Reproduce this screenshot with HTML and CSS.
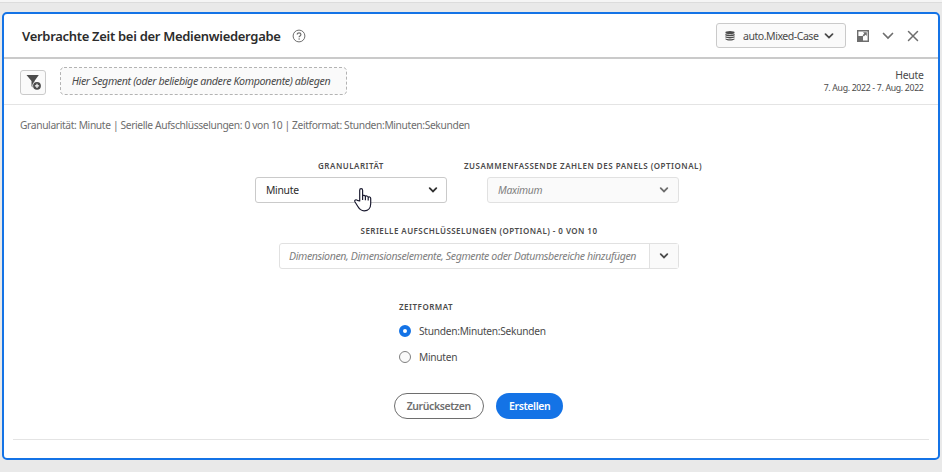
FILE: index.html
```
<!DOCTYPE html>
<html lang="de">
<head>
<meta charset="utf-8">
<title>Verbrachte Zeit bei der Medienwiedergabe</title>
<link rel="stylesheet" href="styles.css">
</head>
<body>
<section class="panel">
  <header class="panel-header">
    <h1 class="title">Verbrachte Zeit bei der Medienwiedergabe</h1>
    <svg class="help" width="14" height="14" viewBox="0 0 14 14" fill="none" stroke="#6e6e6e"><circle cx="7" cy="7" r="5.9"/><path d="M5.2 5.6c0-2.4 3.7-2.3 3.7-.1 0 1.4-1.8 1.4-1.8 2.7" stroke-width="1.2"/><circle cx="7.1" cy="10" r=".75" fill="#6e6e6e" stroke="none"/></svg>
    <div class="suite">
      <svg width="10" height="10" viewBox="0 0 10 10" fill="#4b4b4b"><ellipse cx="5" cy="1.600" rx="4.600" ry="1.500"/><path d="M.4 2.800C2 4 8 4 9.600 2.800V4.400C8 5.500 2 5.500.4 4.400zM.4 5.200C2 6.300 8 6.300 9.600 5.200V6.600C8 7.700 2 7.700.4 6.600zM.4 7.400C2 8.500 8 8.500 9.600 7.400V8.300C8 10 2 10 .4 8.300z"/></svg>
      <span class="suite-name">auto.Mixed-Case</span>
      <svg width="10" height="6" viewBox="0 0 10 6" fill="none" stroke="#4b4b4b" stroke-width="1.8" stroke-linecap="round"><path d="M1.500 1.100 5 4.600l3.500-3.500"/></svg>
    </div>
    <svg class="expand" width="12" height="12" viewBox="0 0 12 12" fill="#6e6e6e"><path d="M.700.700h10.600v10.600H.700z" fill="#fff" stroke="#6e6e6e" stroke-width="1.400"/><path d="M1 6h5v5H1zM6 2.200h3.800V6L8.500 4.700 6.800 6.400 5.600 5.200l1.700-1.700z"/></svg>
    <svg class="collapse" width="12" height="8" viewBox="0 0 12 8" fill="none" stroke="#6e6e6e" stroke-width="1.700" stroke-linecap="round"><path d="M1.500 1.500 6 6l4.500-4.500"/></svg>
    <svg class="close" width="12" height="12" viewBox="0 0 12 12" stroke="#6e6e6e" stroke-width="1.500" stroke-linecap="round"><path d="m1.500 1.500 9 9m0-9-9 9"/></svg>
  </header>
  <div class="segment-bar">
    <div class="filter">
      <svg width="16" height="16" viewBox="0 0 16 16"><path d="M.500 0h12.300L8.500 6v7.800l-3-2.600V6z" fill="#4b4b4b"/><circle cx="11" cy="10.800" r="4.700" fill="#fafafa"/><circle cx="11" cy="10.800" r="3.900" fill="#4b4b4b"/><path d="M11 8.700v4.200M8.900 10.800h4.200" stroke="#fafafa" stroke-width="1.200"/></svg>
    </div>
    <div class="drop"><svg class="dash" width="287" height="28"><rect x=".5" y=".5" width="286" height="27" rx="3.500" fill="#fafafa" stroke="#b3b3b3" stroke-dasharray="3 2"/></svg><span class="drop-text">Hier Segment (oder beliebige andere Komponente) ablegen</span></div>
    <div class="dates"><div class="today">Heute</div><div class="range">7. Aug. 2022 - 7. Aug. 2022</div></div>
  </div>
  <p class="summary">Granularität: Minute | Serielle Aufschlüsselungen: 0 von 10 | Zeitformat: Stunden:Minuten:Sekunden</p>
  <div class="selects">
    <div class="field">
      <label class="label l-gran">Granularität</label>
      <div class="select"><span class="minute">Minute</span>
        <svg width="10" height="6" viewBox="0 0 10 6" fill="none" stroke="#323232" stroke-width="1.800" stroke-linecap="round"><path d="M1.700 1.100 5 4.400l3.300-3.300"/></svg>
        <svg class="cursor" width="20" height="26" viewBox="0 0 20 26"><path d="M6.700 14V3.200c0-2 2.900-2 2.900 0v6c.3-1.200 2.600-1.100 2.800.4.500-1 2.600-.8 2.800.8.700-.9 2.500-.5 2.500 1.200v5.200c0 4-2.400 7-6.500 7-3.700 0-5-1.800-6.500-4.500l-2.800-4.500c-.8-1.600 1.100-2.700 2.400-1.500zM9.600 9v4M12.400 9.600v3.600M15.200 10.400v3" fill="#fff" stroke="#1b1b30" stroke-width="1.200" stroke-linejoin="round"/></svg>
      </div>
    </div>
    <div class="field">
      <label class="label l-sum">Zusammenfassende Zahlen des Panels (optional)</label>
      <div class="select disabled"><span class="maximum">Maximum</span>
        <svg width="10" height="6" viewBox="0 0 10 6" fill="none" stroke="#6e6e6e" stroke-width="1.800" stroke-linecap="round"><path d="M1.700 1.100 5 4.400l3.300-3.300"/></svg>
      </div>
    </div>
  </div>
  <div class="breakdowns">
    <label class="label l-break">Serielle Aufschlüsselungen (optional) - 0 von 10</label>
    <div class="combo">
      <div class="combo-text"><span class="placeholder">Dimensionen, Dimensionselemente, Segmente oder Datumsbereiche hinzufügen</span></div>
      <div class="combo-button"><svg width="10" height="6" viewBox="0 0 10 6" fill="none" stroke="#4b4b4b" stroke-width="1.800" stroke-linecap="round"><path d="M1.700 1.100 5 4.400l3.300-3.300"/></svg></div>
    </div>
  </div>
  <div class="format">
    <div class="label l-format">Zeitformat</div>
    <div class="option"><i class="radio on"></i><span class="hms">Stunden:Minuten:Sekunden</span></div>
    <div class="option"><i class="radio"></i><span class="min">Minuten</span></div>
  </div>
  <div class="actions">
    <div class="button reset"><span>Zurücksetzen</span></div>
    <div class="button create"><span>Erstellen</span></div>
  </div>
  <hr class="rule">
</section>
</body>
</html>
```
FILE: styles.css
```
* { box-sizing: border-box; }
body {
  margin: 0;
  height: 472px;
  overflow: hidden;
  padding: 10px 2px 0;
  background: #e9e9e9;
  border-top: 2px solid #f5f5f5;
  box-shadow: inset 0 1px #dcdcdc;
  font: 11px/16px "Noto Sans", "Open Sans", sans-serif;
  color: #4b4b4b;
}
svg { display: block; flex: none; }
span, p, label, h1, .today, .range { white-space: nowrap; }
.panel {
  width: 938px;
  height: 448px;
  background: #fff;
  border: 2px solid #1473e6;
  border-radius: 5px;
  overflow: hidden;
}
.panel-header {
  display: flex;
  align-items: center;
  height: 45px;
  padding: 0 19px 0 18px;
  border-bottom: 2px solid #cacaca;
}
.title { margin: 0; font: 600 13px/20px "Noto Sans", sans-serif; letter-spacing: -.3px; color: #2c2c2c; width: 259px; }
.help { margin-left: 11px; }
.suite {
  display: flex;
  align-items: center;
  width: 130px;
  height: 25px;
  margin-left: auto;
  padding: 0 0 0 8px;
  border: 1px solid #cacaca;
  border-radius: 3px;
  background: #fafafa;
}
.suite-name { width: 75px; margin: 0 6px 0 8px; letter-spacing: -.5px; transform: scaleX(.96); transform-origin: left; }
.expand { margin-left: 11px; }
.collapse { margin-left: 13px; }
.close { margin-left: 13px; }
.segment-bar {
  display: flex;
  align-items: center;
  height: 46px;
  padding: 0 14px 0 16px;
  border-bottom: 1px solid #e4e4e4;
}
.filter {
  display: flex;
  width: 26px;
  height: 25px;
  margin-top: 1px;
  padding: 4px 0 0 5px;
  border: 1px solid #cacaca;
  border-radius: 3px;
  background: #fafafa;
}
.drop { display: grid; align-items: center; width: 287px; height: 28px; margin: -1px 0 0 14px; }
.dash, .drop-text { grid-area: 1 / 1; }
.drop-text { padding-left: 12px; font-style: italic; letter-spacing: -.4px; transform: scaleX(.972); transform-origin: left; }
.dates { margin-left: auto; text-align: right; line-height: 13px; margin-top: -2px; }
.today { letter-spacing: -.3px; transform: scaleX(.95); transform-origin: right; }
.range { font-size: 9.5px; letter-spacing: -.35px; transform: scaleX(.92); transform-origin: right; }
.summary { margin: 12px 0 0 16px; color: #6e6e6e; letter-spacing: -.4px; transform: scaleX(.934); transform-origin: left; }
.selects { display: flex; gap: 16px; margin: 27px 0 0 251px; }
.field { display: flex; flex-direction: column; align-items: center; width: 192px; }
.field + .field { margin-left: 24px; }
.label { display: block; height: 12px; font-size: 8px; line-height: 12px; font-weight: 600; text-transform: uppercase; letter-spacing: .5px; }
.l-break { letter-spacing: .45px; }
.select {
  display: flex;
  position: relative;
  align-items: center;
  justify-content: space-between;
  width: 192px;
  height: 26px;
  margin-top: 5px;
  padding: 0 8px 0 10px;
  border: 1px solid #cacaca;
  border-radius: 3px;
  color: #2c2c2c;
}
.disabled { padding-right: 9px; background: #fafafa; border-color: #e1e1e1; color: #808080; font-style: italic; }
.minute, .maximum { letter-spacing: -.3px; transform: scaleX(.94); transform-origin: left; }
.cursor { position: absolute; left: 97px; top: 9px; }
.breakdowns { display: flex; flex-direction: column; align-items: center; width: 400px; margin: 22px 0 0 275px; }
.combo { display: flex; width: 400px; height: 26px; margin-top: 6px; border: 1px solid #e1e1e1; border-radius: 3px; }
.combo-text { width: 369px; flex: none; padding: 4px 9px; color: #808080; font-style: italic; }
.placeholder { display: inline-block; letter-spacing: -.4px; transform: scaleX(.963); transform-origin: left; }
.combo-button { display: grid; place-items: center; width: 29px; border-left: 1px solid #e1e1e1; background: #fafafa; }
.format { margin: 32px 0 0 395px; }
.option { display: flex; align-items: center; height: 16px; margin-top: 10px; gap: 8px; }
.radio { width: 12px; height: 12px; border: 1px solid #808080; border-radius: 50%; background: #fafafa; }
.on { border: 4px solid #1473e6; background: #fff; }
.hms, .min { letter-spacing: -.3px; transform: scaleX(.925); transform-origin: left; }
.actions { display: flex; gap: 12px; margin: 28px 0 0 390px; }
.button { display: grid; place-items: center; height: 26px; border-radius: 13px; font-weight: 600; letter-spacing: -.4px; }
.button span { transform: scaleX(.95); }
.reset { width: 90px; border: 1px solid #6e6e6e; color: #6e6e6e; }
.create { width: 67px; background: #1473e6; color: #fff; }
.rule { height: 1px; margin: 20px 9px 0; border: 0; background: #e4e4e4; }
```
